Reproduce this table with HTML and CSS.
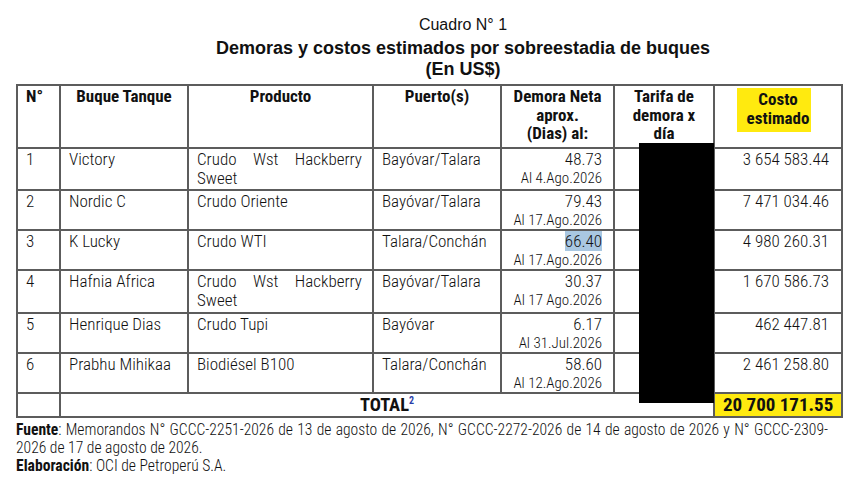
FILE: index.html
```html
<!DOCTYPE html>
<html lang="es">
<head>
<meta charset="utf-8">
<title>Cuadro N° 1</title>
<link rel="stylesheet" href="styles.css">
</head>
<body>
<div class="page">
  <div class="titles">
    <div class="caption">Cuadro N° 1</div>
    <div class="heading">Demoras y costos estimados por sobreestadia de buques</div>
    <div class="heading">(En US$)</div>
  </div>
  <div class="table-wrap">
    <table class="grid">
      <colgroup>
        <col class="c-n"><col class="c-buque"><col class="c-prod"><col class="c-puerto"><col class="c-demora"><col class="c-tarifa"><col class="c-costo">
      </colgroup>
      <thead>
        <tr class="r-head">
          <th class="left">N°</th>
          <th>Buque Tanque</th>
          <th>Producto</th>
          <th>Puerto(s)</th>
          <th>Demora Neta<br>aprox.<br>(Dias) al:</th>
          <th>Tarifa de<br>demora x<br>día</th>
          <th><span class="hl-yellow">Costo<br>estimado</span></th>
        </tr>
      </thead>
      <tbody>
        <tr class="r-42">
          <td>1</td><td>Victory</td><td class="just">Crudo Wst Hackberry Sweet</td><td>Bayóvar/Talara</td>
          <td class="num">48.73<div class="date">Al 4.Ago.2026</div></td><td></td><td class="num cost">3 654 583.44</td>
        </tr>
        <tr class="r-40">
          <td>2</td><td>Nordic C</td><td>Crudo Oriente</td><td>Bayóvar/Talara</td>
          <td class="num">79.43<div class="date">Al 17.Ago.2026</div></td><td></td><td class="num cost">7 471 034.46</td>
        </tr>
        <tr class="r-40">
          <td>3</td><td>K Lucky</td><td>Crudo WTI</td><td>Talara/Conchán</td>
          <td class="num"><span class="hl-blue">66.40</span><div class="date">Al 17.Ago.2026</div></td><td></td><td class="num cost">4 980 260.31</td>
        </tr>
        <tr class="r-43">
          <td>4</td><td>Hafnia Africa</td><td class="just">Crudo Wst Hackberry Sweet</td><td>Bayóvar/Talara</td>
          <td class="num">30.37<div class="date">Al 17 Ago.2026</div></td><td></td><td class="num cost">1 670 586.73</td>
        </tr>
        <tr class="r-40">
          <td>5</td><td>Henrique Dias</td><td>Crudo Tupi</td><td>Bayóvar</td>
          <td class="num">6.17<div class="date">Al 31.Jul.2026</div></td><td></td><td class="num cost">462 447.81</td>
        </tr>
        <tr class="r-40">
          <td>6</td><td>Prabhu Mihikaa</td><td>Biodiésel B100</td><td>Talara/Conchán</td>
          <td class="num">58.60<div class="date">Al 12.Ago.2026</div></td><td></td><td class="num cost">2 461 258.80</td>
        </tr>
        <tr class="r-total">
          <td></td>
          <td colspan="5" class="total-label">TOTAL<sup class="note">2</sup></td>
          <td class="num total-value">20 700 171.55</td>
        </tr>
      </tbody>
    </table>
    <div class="redact"></div>
  </div>
  <div class="notes">
    <p class="source"><b>Fuente</b>: Memorandos N° GCCC-2251-2026 de 13 de agosto de 2026, N° GCCC-2272-2026 de 14 de agosto de 2026 y N° GCCC-2309-2026 de 17 de agosto de 2026.</p>
    <p class="source"><b>Elaboración</b>: OCI de Petroperú S.A.</p>
  </div>
</div>
</body>
</html>
```
FILE: styles.css
```css
html, body {
  margin: 0;
  padding: 0;
  background: #ffffff;
}
body {
  color: #111111;
  font-family: "Roboto Condensed", "Liberation Sans", Arial, sans-serif;
  font-weight: 300;
}
.page {
  width: 860px;
  height: 478px;
  padding-top: 12px;
  box-sizing: border-box;
  overflow: hidden;
}
.titles {
  padding-left: 66px;
  margin-bottom: 5px;
  text-align: center;
  font-family: "Liberation Sans", Arial, sans-serif;
  font-weight: normal;
}
.caption {
  font-size: 16px;
  line-height: 26px;
}
.heading {
  font-size: 18px;
  font-weight: bold;
  line-height: 20.5px;
}
.table-wrap {
  position: relative;
  margin-left: 16px;
  width: 825px;
}
.grid {
  border-collapse: collapse;
  table-layout: fixed;
  width: 825px;
  font-size: 17px;
  line-height: 18.5px;
}
.c-n { width: 43px; }
.c-buque { width: 128px; }
.c-prod { width: 185px; }
.c-puerto { width: 128px; }
.c-demora { width: 113px; }
.c-tarifa { width: 100px; }
.c-costo { width: 128px; }

.grid th, .grid td {
  border: 2px solid #5c5c5c;
  vertical-align: top;
  padding: 1px 8px 0 8px;
  overflow: hidden;
}
.grid th {
  font-weight: bold;
  text-align: center;
}
.grid th.left { text-align: left; }
.r-head { height: 63px; }
.r-42 { height: 42px; }
.r-40 { height: 40px; }
.r-43 { height: 43px; }
.r-total { height: 24px; }

.grid td.num {
  text-align: right;
  padding-right: 11px;
  white-space: nowrap;
}
.grid td.cost { padding-right: 12px; }
.grid td.just {
  text-align: justify;
  padding-right: 10px;
}
.date {
  font-size: 15px;
  line-height: 18.5px;
  white-space: nowrap;
}
.hl-blue {
  background: #a9c7e1;
}
.hl-yellow {
  display: inline-block;
  background: #ffea0f;
  padding: 2px 2px 5px 10px;
  margin-right: 8px;
  margin-top: 1px;
}
.grid td.total-label {
  text-align: center;
  font-weight: bold;
  font-size: 18.5px;
  line-height: 20px;
  padding-top: 1px;
  padding-bottom: 0;
}
.note {
  color: #2a3ea8;
  font-size: 10px;
  vertical-align: super;
  line-height: 0;
}
.grid td.total-value {
  background: #ffea0f;
  font-weight: bold;
  font-size: 19px;
  line-height: 20px;
  padding-top: 1px;
  padding-bottom: 0;
  padding-right: 10px;
}
.redact {
  position: absolute;
  left: 623px;
  top: 59px;
  width: 75px;
  height: 260px;
  background: #000000;
}
.notes {
  margin-left: 16px;
  width: 812px;
  padding-top: 3px;
}
.source {
  margin: 0;
  font-size: 15.6px;
  line-height: 18px;
  text-align: justify;
}
.source b {
  font-weight: bold;
}
```
